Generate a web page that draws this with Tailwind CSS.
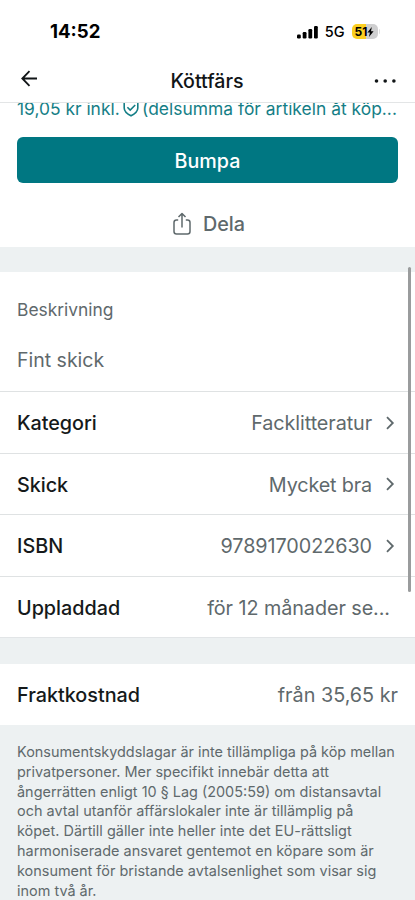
<!DOCTYPE html>
<html lang="sv">
<head>
<meta charset="utf-8">
<meta name="viewport" content="width=device-width, initial-scale=1">
<title>Köttfärs</title>
<script src="https://cdn.jsdelivr.net/npm/@tailwindcss/browser@4"></script>
</head>
<body class="bg-white">
<div class="relative flex h-[900px] w-[415px] flex-col overflow-hidden bg-white font-['Inter','Liberation_Sans',sans-serif] text-[19.8px] whitespace-nowrap text-[#5f696c]">
  <div class="flex h-[60px] shrink-0 items-center justify-between pt-[3px] pr-[35px] pl-[50px] text-black">
    <span class="text-[18.6px] font-bold">14:52</span>
    <div class="flex items-center">
      <svg class="h-[14px] w-[21px]" viewBox="0 0 21 14"><rect x="0" y="9.5" width="3.8" height="4" rx="1.2"/><rect x="5.7" y="7" width="3.8" height="6.5" rx="1.2"/><rect x="11.4" y="4" width="3.8" height="9.5" rx="1.2"/><rect x="17" y="1" width="3.8" height="12.5" rx="1.2"/></svg>
      <span class="ml-[7px] text-[14.5px] font-medium">5G</span>
      <div class="ml-[7px] flex h-[15px] w-[26px] items-center justify-center rounded-[5px] bg-linear-to-r from-[#fbcf21] from-52% to-[#cfcfd0] to-52% text-[12px] font-bold">
        <span>51</span>
        <svg class="h-[10px] w-[7px]" viewBox="0 0 7 10"><path d="M4.8 0L.4 5.6h2.5L2 10l4.6-5.8H4z"/></svg>
      </div>
      <div class="ml-[1px] h-[5px] w-[1.5px] rounded-r-full bg-[#e0e0e0]"></div>
    </div>
  </div>
  <div class="flex h-[43px] shrink-0 items-center justify-between border-b border-[#e3e5e6] pr-[18px] pl-[19px] text-[#111517]">
    <svg class="mb-[6px] h-[18px] w-[24px]" viewBox="0 0 24 18" fill="none" stroke="currentColor" stroke-width="1.8"><path d="M18 9.5H3.3M10.5 2.2L3.3 9.5l7.2 7.3"/></svg>
    <span class="mr-[2px] pt-[1px] text-[19.6px] font-[450]">Köttfärs</span>
    <svg class="mb-[1px] h-[6px] w-[24px]" viewBox="0 0 24 6" fill="currentColor"><circle cx="3.5" cy="3" r="1.8"/><circle cx="12.2" cy="3" r="1.8"/><circle cx="20.9" cy="3" r="1.8"/></svg>
  </div>
  <div class="flex h-[34px] shrink-0 overflow-hidden px-[17px] text-[17.4px] leading-[20px] text-[#147e86]">
    <div class="-mt-[4px] flex h-[20px]">
      <span class="w-[103px]">19,05 kr inkl.</span>
      <svg class="mr-[3px] ml-[3px] h-[18px] w-[16px] shrink-0" viewBox="0 0 16 18" fill="none" stroke="currentColor" stroke-width="1.6"><path d="M8 1L1.2 3.5V9c0 3.6 3.2 6 6.8 7.8 3.6-1.8 6.8-4.2 6.8-7.8V3.500zM4.400 8.200L7.200 11l5-5"/></svg>
      <span class="tracking-[0.02px]">(delsumma för artikeln åt köp...</span>
    </div>
  </div>
  <div class="mx-[17px] flex h-[46px] shrink-0 items-center justify-center rounded-[6px] bg-[#007782] pt-[3px] text-[19.7px] font-[450] text-white">Bumpa</div>
  <div class="flex h-[64px] shrink-0 items-center justify-center pt-[18px] pl-[3px]">
    <svg class="h-[24px] w-[18px]" viewBox="0 0 18 24" fill="none" stroke="currentColor" stroke-width="1.5" stroke-linejoin="round"><path d="M5.2 8H3.5Q1 8 1 10.5v9Q1 22 3.5 22h11q2.5 0 2.500-2.500v-9Q17 8 14.500 8h-1.700M9 15.500V1.500M5.500 5L9 1.500 12.500 5"/></svg>
    <span class="ml-[12px] pt-[2px] font-[450]">Dela</span>
  </div>
  <div class="h-[25px] shrink-0 bg-[#edf1f2]"></div>
  <div class="flex h-[119px] shrink-0 flex-col px-[17px] pt-[26px]">
    <span class="text-[17.4px] leading-[24px]">Beskrivning</span>
    <span class="mt-[25px] text-[19.5px] leading-[26px]">Fint skick</span>
  </div>
  <div class="flex h-[62px] shrink-0 items-center border-t border-[#dfe2e3] px-[17px]">
    <span class="flex-1 pt-[3px] font-medium tracking-[-0.05px] text-[#15191a]">Kategori</span>
    <span class="pt-[3px] tracking-[-0.09px]">Facklitteratur</span>
    <svg class="mr-[3px] ml-[14px] h-[14px] w-[9px]" viewBox="0 0 9 14" fill="none" stroke="currentColor" stroke-width="1.8"><path d="M1 1.2L6.8 7l-5.8 5.8"/></svg>
  </div>
  <div class="flex h-[61px] shrink-0 items-center border-t border-[#dfe2e3] px-[17px]">
    <span class="flex-1 pt-[3px] font-medium tracking-[-0.05px] text-[#15191a]">Skick</span>
    <span class="pt-[3px] tracking-[-0.15px]">Mycket bra</span>
    <svg class="mr-[3px] ml-[14px] h-[14px] w-[9px]" viewBox="0 0 9 14" fill="none" stroke="currentColor" stroke-width="1.8"><path d="M1 1.2L6.8 7l-5.8 5.8"/></svg>
  </div>
  <div class="flex h-[62px] shrink-0 items-center border-t border-[#dfe2e3] px-[17px]">
    <span class="flex-1 pt-[3px] font-medium text-[#15191a]">ISBN</span>
    <span class="pt-[3px] tracking-[-0.06px]">9789170022630</span>
    <svg class="mr-[3px] ml-[14px] h-[14px] w-[9px]" viewBox="0 0 9 14" fill="none" stroke="currentColor" stroke-width="1.8"><path d="M1 1.2L6.8 7l-5.8 5.8"/></svg>
  </div>
  <div class="flex h-[61px] shrink-0 items-center border-t border-[#dfe2e3] pt-[4px] pr-[25px] pl-[17px]">
    <span class="flex-1 font-medium text-[#15191a]">Uppladdad</span>
    <span class="tracking-[-0.07px]">för 12 månader se...</span>
  </div>
  <div class="h-[27px] shrink-0 border-t border-[#e2e5e7] bg-[#edf1f2]"></div>
  <div class="flex h-[61px] shrink-0 items-center px-[17px] pt-[3px]">
    <span class="flex-1 font-medium text-[#15191a]">Fraktkostnad</span>
    <span>från 35,65 kr</span>
  </div>
  <div class="flex-1 bg-[#edf1f2] px-[17px] pt-[17px] text-[14.45px] leading-[19.8px]">
    Konsumentskyddslagar är inte tillämpliga på köp mellan<br>privatpersoner. Mer specifikt innebär detta att<br>ångerrätten enligt 10 § Lag (2005:59) om distansavtal<br>och avtal utanför affärslokaler inte är tillämplig på<br>köpet. Därtill gäller inte heller inte det EU-rättsligt<br>harmoniserade ansvaret gentemot en köpare som är<br>konsument för bristande avtalsenlighet som visar sig<br>inom två år.
  </div>
  <div class="absolute top-[267px] left-[408px] h-[325px] w-[3px] rounded-full bg-[#9a9c9d]"></div>
</div>
</body>
</html>
